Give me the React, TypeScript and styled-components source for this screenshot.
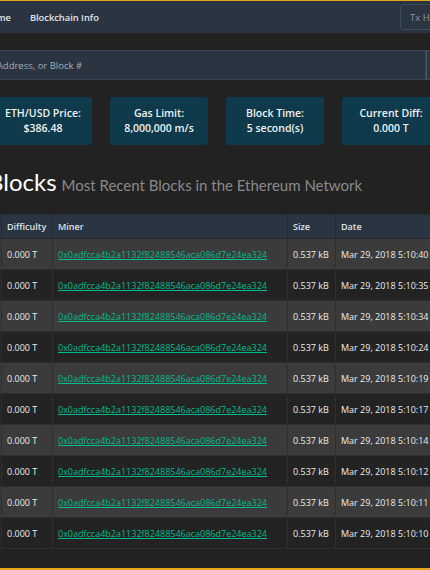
import React from "react";
import styled, { createGlobalStyle } from "styled-components";

const GlobalStyle = createGlobalStyle`
  html, body {
    margin: 0;
    padding: 0;
    background: #222;
  }
  body {
    font-family: "Open Sans", "Liberation Sans", sans-serif;
    color: #fff;
  }
`;

const Viewport = styled.div`
  width: 430px;
  height: 570px;
  overflow: hidden;
  background: #222;
  box-sizing: border-box;
  border-bottom: 2px solid #e8a317;
  display: flex;
  flex-direction: column;
`;

const Nav = styled.nav`
  flex-shrink: 0;
  height: 33px;
  box-sizing: border-box;
  border-top: 1px solid #e8a317;
  background: #2a3541;
  display: flex;
  align-items: center;
  margin-right: -100px;
`;

const NavLinks = styled.div`
  display: flex;
  gap: 19px;
  margin-left: -16px;
`;

const NavLink = styled.a`
  font-size: 9.3px;
  font-weight: 600;
  color: #e4e6e8;
  text-decoration: none;
`;

const TxSearch = styled.input`
  margin-left: auto;
  margin-right: 5px;
  width: 125px;
  height: 26px;
  box-sizing: border-box;
  background: #2a3541;
  border: 1px solid #3e4b58;
  border-radius: 3px;
  padding: 0 9px;
  font-family: inherit;
  font-size: 9.5px;
  color: #fff;
  &::placeholder {
    color: #8d99a4;
  }
`;

const SearchBar = styled.div`
  flex-shrink: 0;
  margin-top: 17px;
  height: 30px;
  display: flex;
  margin-left: -100px;
  margin-right: -60px;
`;

const SearchInput = styled.input`
  width: 526px;
  flex-shrink: 0;
  height: 30px;
  box-sizing: border-box;
  background: #2a3541;
  border: 1px solid #3a4653;
  padding: 0 10px;
  font-family: inherit;
  font-size: 9.5px;
  &::placeholder {
    color: #a3abb3;
  }
`;

const SearchButton = styled.button`
  flex: 1;
  background: #2c3844;
  border: 1px solid #3e4b58;
  border-left: 1px solid #4a5764;
`;

const Stats = styled.div`
  flex-shrink: 0;
  margin-top: 17px;
  margin-left: -6px;
  display: flex;
  gap: 18px;
`;

const StatBox = styled.div`
  flex-shrink: 0;
  width: 98px;
  height: 48px;
  background: #0f3a4b;
  border-radius: 3px;
  display: flex;
  flex-direction: column;
  align-items: center;
  justify-content: center;
  font-size: 10.5px;
  font-weight: 600;
  line-height: 15px;
  color: #eef2f4;
`;

const Heading = styled.h2`
  flex-shrink: 0;
  margin: 22px 0 17px -12px;
  height: 30px;
  line-height: 30px;
  font-family: Lato, "Liberation Sans", sans-serif;
  font-weight: 400;
  font-size: 24px;
  color: #fff;
  white-space: nowrap;
`;

const Sub = styled.small`
  font-size: 15px;
  color: #8a8a8a;
  margin-left: 5px;
`;

const Table = styled.table`
  flex-shrink: 0;
  border-collapse: collapse;
  table-layout: fixed;
  width: 504px;
  margin-left: -59px;
  font-size: 9px;
  font-weight: 500;
  color: #ececec;
`;

const HeadCell = styled.th`
  height: 23px;
  padding: 0 5px;
  text-align: left;
  background: #2a3541;
  border: 1px solid #242a30;
  font-weight: 600;
  color: #dfe3e6;
  white-space: nowrap;
`;

const Row = styled.tr<{ $odd: boolean }>`
  height: 31px;
  background: ${({ $odd }) => ($odd ? "#3b3b3b" : "#232323")};
`;

const Cell = styled.td`
  padding: 0 5px;
  border: 1px solid #2f2f2f;
  white-space: nowrap;
  overflow: hidden;
`;

const MinerLink = styled.a`
  color: #00bc8c;
  font-weight: 400;
  text-decoration: underline;
`;

const times = ["40", "35", "34", "24", "19", "17", "14", "12", "11", "10"];

export default function App() {
  return (
    <Viewport>
      <GlobalStyle />
      <Nav>
        <NavLinks>
          <NavLink href="#">Home</NavLink>
          <NavLink href="#">Blockchain Info</NavLink>
        </NavLinks>
        <TxSearch placeholder="Tx Hash" />
      </Nav>

      <SearchBar>
        <SearchInput placeholder="Search by Tx Hash, Address, or Block #" />
        <SearchButton />
      </SearchBar>

      <Stats>
        <StatBox>
          <span>ETH/USD Price:</span>
          <span>$386.48</span>
        </StatBox>
        <StatBox>
          <span>Gas Limit:</span>
          <span>8,000,000 m/s</span>
        </StatBox>
        <StatBox>
          <span>Block Time:</span>
          <span>5 second(s)</span>
        </StatBox>
        <StatBox>
          <span>Current Diff:</span>
          <span>0.000 T</span>
        </StatBox>
      </Stats>

      <Heading>
        Blocks<Sub>Most Recent Blocks in the Ethereum Network</Sub>
      </Heading>

      <Table>
        <colgroup>
          <col style={{ width: 60 }} />
          <col style={{ width: 51 }} />
          <col style={{ width: 235 }} />
          <col style={{ width: 48 }} />
          <col style={{ width: 110 }} />
        </colgroup>
        <thead>
          <tr>
            <HeadCell>Block</HeadCell>
            <HeadCell>Difficulty</HeadCell>
            <HeadCell>Miner</HeadCell>
            <HeadCell>Size</HeadCell>
            <HeadCell>Date</HeadCell>
          </tr>
        </thead>
        <tbody>
          {times.map((s, i) => (
            <Row key={s} $odd={i % 2 === 0}>
              <Cell>{2410 - i}</Cell>
              <Cell>0.000 T</Cell>
              <Cell>
                <MinerLink href="#">0x0adfcca4b2a1132f82488546aca086d7e24ea324</MinerLink>
              </Cell>
              <Cell>0.537 kB</Cell>
              <Cell>Mar 29, 2018 5:10:{s} PM</Cell>
            </Row>
          ))}
        </tbody>
      </Table>
    </Viewport>
  );
}
